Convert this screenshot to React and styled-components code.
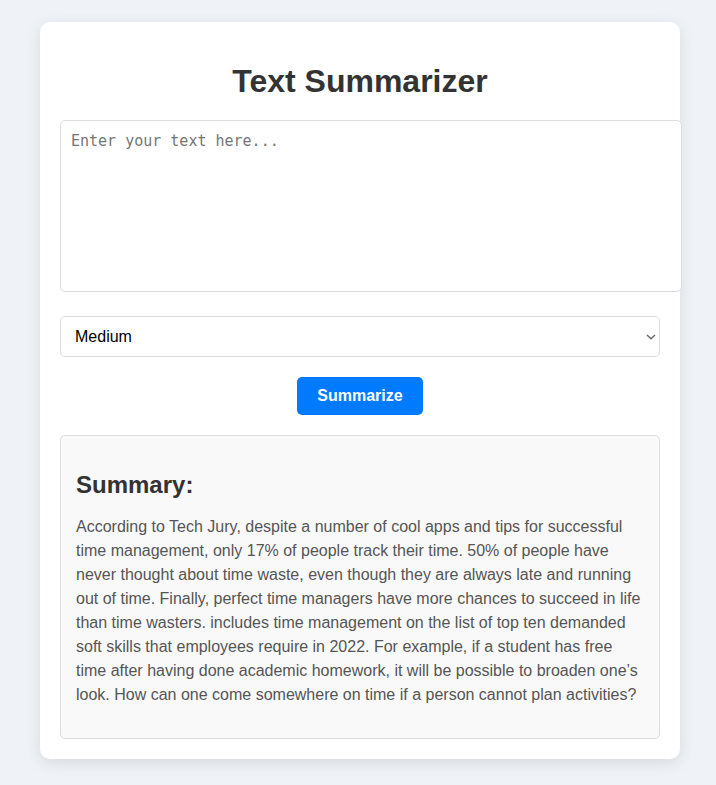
import React, { useState } from "react";
import styled, { createGlobalStyle } from "styled-components";

const GlobalStyle = createGlobalStyle`
  body {
    margin: 0;
    padding: 0;
    min-height: 100vh;
    background: #eff3f8;
    font-family: "Liberation Sans", Arial, sans-serif;
  }
`;

const Page = styled.div`
  padding: 22px 36px 26px 40px;
`;

const Card = styled.main`
  max-width: 600px;
  margin: 0 auto;
  padding: 20px;
  background: #fff;
  border-radius: 10px;
  box-shadow: 0 4px 15px rgba(0, 0, 0, 0.1);
`;

const Title = styled.h1`
  margin: 20px 0;
  font-size: 32px;
  line-height: 38px;
  text-align: center;
  color: #333;
`;

const TextInput = styled.textarea`
  display: block;
  width: 100%;
  height: 150px;
  margin: 0 0 24px;
  padding: 10px;
  border: 1px solid #ddd;
  border-radius: 5px;
  font-family: "DejaVu Sans Mono", monospace;
  font-size: 15px;
  line-height: 20px;
  resize: none;
`;

const SelectField = styled.div`
  display: grid;
  align-items: center;
  margin: 0 0 20px;

  > * {
    grid-area: 1 / 1;
  }
`;

const LengthSelect = styled.select`
  appearance: none;
  width: 100%;
  padding: 10px 24px 10px 14px;
  border: 1px solid #ddd;
  border-radius: 5px;
  background: #fff;
  color: #000;
  font-family: inherit;
  font-size: 16px;
  line-height: 19px;
`;

const Chevron = styled.svg`
  justify-self: end;
  margin-right: 4px;
  pointer-events: none;
`;

const SubmitButton = styled.button`
  display: block;
  margin: 0 auto 20px;
  padding: 10px 20px;
  border: 0;
  border-radius: 5px;
  background: #007bff;
  color: #fff;
  font-family: inherit;
  font-size: 16px;
  font-weight: bold;
  cursor: pointer;
`;

const SummaryPanel = styled.section`
  padding: 15px;
  border: 1px solid #ddd;
  border-radius: 5px;
  background: #f9f9f9;
`;

const SummaryTitle = styled.h2`
  margin: 20px 0 16px;
  font-size: 24px;
  line-height: 28px;
  color: #333;
`;

const SummaryText = styled.p`
  margin: 0 0 16px;
  font-size: 16px;
  line-height: 24px;
  color: #555;
`;

export default function App() {
  const [text, setText] = useState("");
  const [length, setLength] = useState("medium");

  return (
    <>
      <GlobalStyle />
      <Page>
        <Card>
          <Title>Text Summarizer</Title>
          <TextInput
            aria-label="Text to summarize"
            placeholder="Enter your text here..."
            value={text}
            onChange={(e) => setText(e.target.value)}
          />
          <SelectField>
            <LengthSelect
              aria-label="Summary length"
              value={length}
              onChange={(e) => setLength(e.target.value)}
            >
              <option value="short">Short</option>
              <option value="medium">Medium</option>
              <option value="long">Long</option>
            </LengthSelect>
            <Chevron width="10" height="6" viewBox="0 0 10 6" aria-hidden="true">
              <path
                d="M1 1L5 4.8L9 1"
                fill="none"
                stroke="#6b6b6b"
                strokeWidth="1.5"
              />
            </Chevron>
          </SelectField>
          <SubmitButton type="button">Summarize</SubmitButton>
          <SummaryPanel>
            <SummaryTitle>Summary:</SummaryTitle>
            <SummaryText>
              According to Tech Jury, despite a number of cool apps and tips for
              successful time management, only 17% of people track their time.
              50% of people have never thought about time waste, even though
              they are always late and running out of time. Finally, perfect
              time managers have more chances to succeed in life than time
              wasters. includes time management on the list of top ten demanded
              soft skills that employees require in 2022. For example, if a
              student has free time after having done academic homework, it will
              be possible to broaden one’s look. How can one come somewhere on
              time if a person cannot plan activities?
            </SummaryText>
          </SummaryPanel>
        </Card>
      </Page>
    </>
  );
}
